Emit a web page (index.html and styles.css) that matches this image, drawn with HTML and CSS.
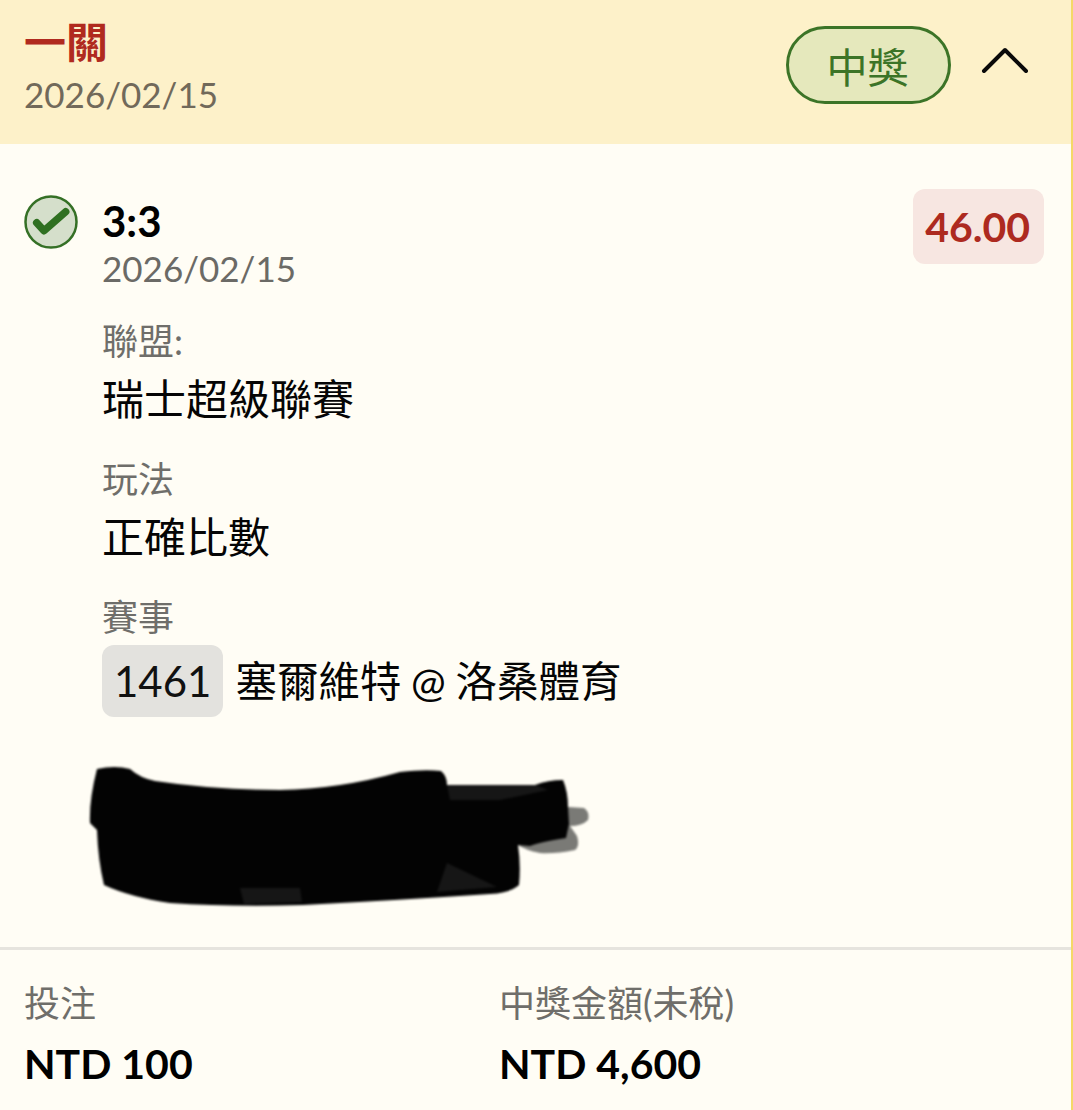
FILE: index.html
```html
<!DOCTYPE html>
<html lang="zh-Hant">
<head>
    <meta charset="UTF-8">
    <meta name="viewport" content="width=device-width, initial-scale=1.0">
    <title>一關</title>
    <link rel="stylesheet" href="styles.css">
</head>
<body>
    <div class="card">
        <header class="card-head">
            <div class="head-text">
                <div class="bet-type">一關</div>
                <div class="head-date">2026/02/15</div>
            </div>
            <div class="head-actions">
                <span class="status-pill">中獎</span>
                <svg class="chevron" width="48" height="26" viewBox="0 0 48 26">
                    <path d="M3 24 L24 3 L45 24" fill="none" stroke="#0a0a0a" stroke-width="4" stroke-linecap="round" stroke-linejoin="round"/>
                </svg>
            </div>
        </header>

        <section class="leg">
            <svg class="check" width="54" height="54" viewBox="0 0 54 54">
                <circle cx="27" cy="27" r="25.5" fill="#d5dfcb" stroke="#357026" stroke-width="2.5"/>
                <path d="M12.7 27.7 L20 35.7 L41.7 16.7" fill="none" stroke="#2f7021" stroke-width="7.5" stroke-linecap="round" stroke-linejoin="round"/>
            </svg>
            <div class="leg-main">
                <div class="leg-top">
                    <div>
                        <div class="score">3:3</div>
                        <div class="leg-date">2026/02/15</div>
                    </div>
                    <div class="odds">46.00</div>
                </div>
                <div class="field field-first">
                    <div class="field-label">聯盟:</div>
                    <div class="field-value">瑞士超級聯賽</div>
                </div>
                <div class="field">
                    <div class="field-label">玩法</div>
                    <div class="field-value">正確比數</div>
                </div>
                <div class="field">
                    <div class="field-label">賽事</div>
                    <div class="match-row">
                        <span class="match-no">1461</span>
                        <span class="match-name">塞爾維特 @ 洛桑體育</span>
                    </div>
                </div>
            </div>
        </section>

        <div class="scribble-wrap">
            <svg class="scribble" width="510" height="150" viewBox="85 762 510 150">
                <path d="M568 807 L584 808 Q590 812 588 820 Q582 826 570 826 L577 836 Q580 846 575 850 Q555 854 540 853 Q525 850 518 845 L520 800 Z" fill="#7a7a76"/>
                <path d="M97 769 Q115 765 130 769 Q140 778 155 781 Q215 790 280 790 Q340 789 400 772 Q425 769 441 771 Q447 776 447 785 L535 785 Q548 780 563 780 Q568 792 568 807 L569 824 L566 838 Q540 842 530 846 L518 845 Q521 865 519 885 Q510 893 490 894 Q400 900 303 905 Q230 907 170 903 Q130 897 104 885 Q98 860 97 830 L90 823 Q89 800 97 769 Z" fill="#030303"/>
                <path d="M447 785 L535 785 L548 790 L500 800 L450 800 Z" fill="#161616"/>
                <path d="M240 888 L300 888 L302 902 L244 904 Z" fill="#161616"/>
                <path d="M447 863 L497 887 L437 892 Z" fill="#161616"/>
            </svg>
        </div>

        <footer class="totals">
            <div class="total">
                <div class="field-label">投注</div>
                <div class="total-value">NTD 100</div>
            </div>
            <div class="total">
                <div class="field-label">中獎金額(未稅)</div>
                <div class="total-value">NTD 4,600</div>
            </div>
        </footer>
    </div>
</body>
</html>
```

FILE: styles.css
```css
html, body {
    margin: 0;
    padding: 0;
}
body {
    font-family: Lato, "Noto Sans CJK TC", sans-serif;
    background: #fffdf5;
}
.card {
    height: 1110px;
    overflow: hidden;
    border-right: 2px solid #f5d867;
    box-sizing: border-box;
}
.card-head {
    height: 144px;
    box-sizing: border-box;
    background: #fdf1c9;
    padding: 18px 42px 0 24px;
    display: flex;
    justify-content: space-between;
}
.bet-type {
    font-size: 42px;
    line-height: 48px;
    font-weight: 700;
    color: #b02a1e;
}
.head-date {
    font-size: 35px;
    line-height: 46px;
    margin-top: 5px;
    color: #71695a;
}
.head-actions {
    display: flex;
    align-items: center;
    gap: 30px;
    height: 94px;
}
.chevron {
    margin-bottom: 10px;
}
.status-pill {
    width: 165px;
    height: 78px;
    box-sizing: border-box;
    border: 3px solid #3c7427;
    border-radius: 39px;
    background: #e5e8bc;
    color: #3c7427;
    font-size: 41px;
    padding-right: 2px;
    display: flex;
    align-items: center;
    justify-content: center;
}
.leg {
    display: flex;
    gap: 24px;
    padding: 45px 27px 0 24px;
}
.check {
    flex: none;
    margin-top: 6px;
}
.leg-main {
    flex: 1;
}
.leg-top {
    display: flex;
    justify-content: space-between;
    align-items: flex-start;
}
.score {
    font-size: 42px;
    line-height: 52px;
    font-weight: 700;
    color: #000;
    margin-top: 6px;
}
.leg-date {
    font-size: 35px;
    line-height: 42px;
    color: #6b6a66;
}
.odds {
    background: #f7e6e1;
    color: #ad2a20;
    font-size: 41px;
    font-weight: 700;
    line-height: 75px;
    height: 75px;
    padding: 0 14px 0 12px;
    border-radius: 12px;
}
.field {
    margin-top: 26px;
}
.field-first {
    margin-top: 29px;
}
.field-label {
    font-size: 36px;
    line-height: 46px;
    color: #6f6e6a;
}
.field-value {
    font-size: 42px;
    line-height: 62px;
    margin-top: 4px;
    color: #050505;
}
.match-row {
    display: flex;
    align-items: center;
    gap: 12px;
    margin-top: 5px;
}
.match-no {
    background: #e3e2de;
    border-radius: 12px;
    height: 72px;
    line-height: 72px;
    padding: 0 12px;
    font-size: 42px;
    color: #111;
}
.match-name {
    font-size: 41.5px;
    line-height: 72px;
    height: 72px;
    word-spacing: -1px;
    color: #050505;
}
.scribble-wrap {
    margin-top: 45px;
    padding-left: 85px;
    height: 185px;
}
.scribble {
    display: block;
    filter: blur(1.2px);
}
.totals {
    border-top: 3px solid #e6e4de;
    display: flex;
    padding: 30px 24px 0;
}
.total {
    width: 475px;
}
.total-value {
    font-size: 41px;
    font-weight: 700;
    line-height: 52px;
    margin-top: 12px;
    color: #000;
}
```
